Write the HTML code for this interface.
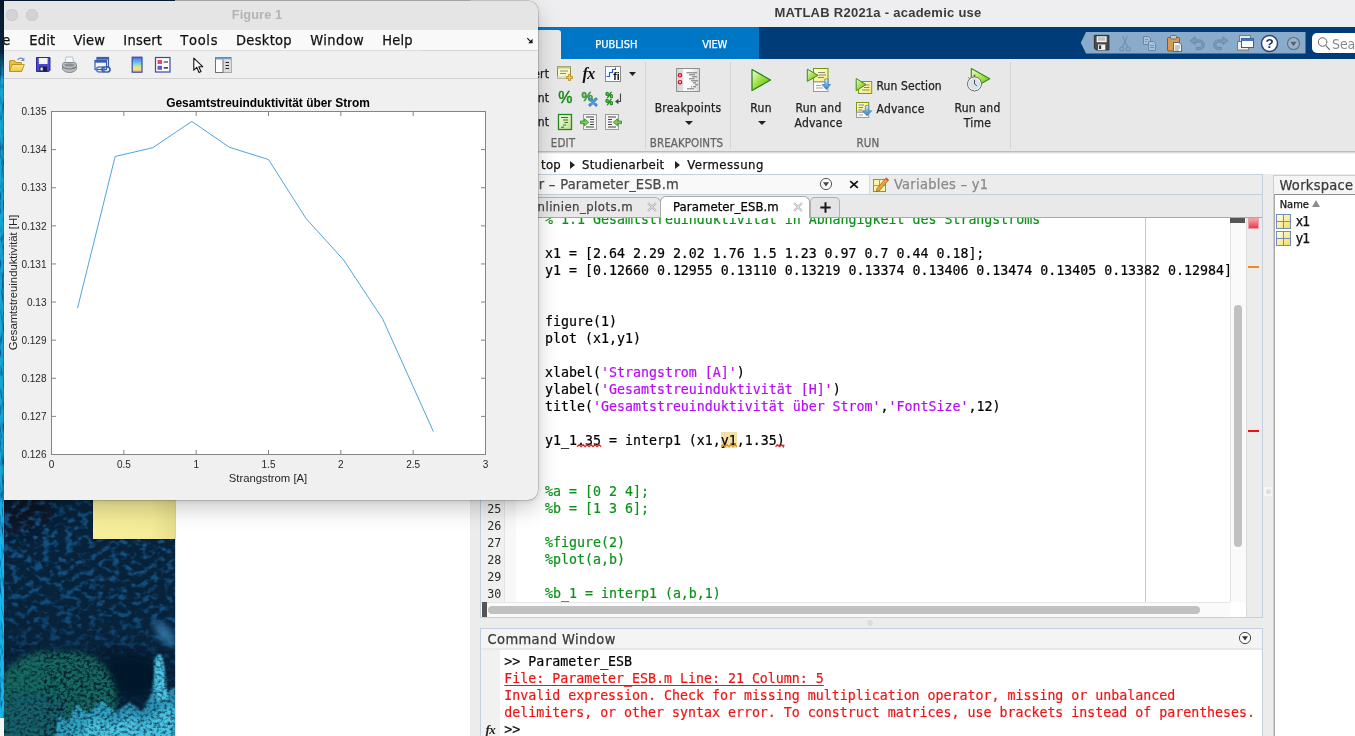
<!DOCTYPE html>
<html lang="de"><head><meta charset="utf-8"><title>MATLAB R2021a - academic use</title>
<style>
html,body{margin:0;padding:0;}
html{background:#fff;}
body{will-change:transform;width:1355px;height:736px;overflow:hidden;position:relative;background:#0b3050;color:#1a1a1a;}
.abs{position:absolute;}
.t{position:absolute;white-space:nowrap;}
.ui{font-family:"DejaVu Sans Condensed","DejaVu Sans","Liberation Sans",sans-serif;-webkit-text-stroke:0.25px currentColor;}
.mono{font-family:"DejaVu Sans Mono","Liberation Mono",monospace;}
.hel{font-family:"Liberation Sans",sans-serif;}
.code{-webkit-text-stroke:0.2px currentColor;position:absolute;white-space:pre;font-family:"DejaVu Sans Mono","Liberation Mono",monospace;font-size:13.28px;line-height:17px;height:17px;color:#000;}
.cm{color:#0c9218;}
.st{color:#b80cf7;}
.er{color:#f01414;}

</style></head><body>
<svg class="abs" style="left:0;top:0" width="4" height="718" viewBox="0 0 4 718"><defs>
<filter id="sn" color-interpolation-filters="sRGB" x="0" y="0" width="100%" height="100%"><feTurbulence type="fractalNoise" baseFrequency="0.5 0.09" numOctaves="2" seed="3"/><feColorMatrix type="matrix" values="0 0 0 0 0.02  0 0 0 0 0.28  0 0 0 0 0.5  2.4 0 0 0 -1.1"/></filter></defs>
<rect width="4" height="718" fill="#18b6ec"/><rect width="4" height="718" filter="url(#sn)"/><defs><linearGradient id="sg" x1="0" y1="0" x2="0" y2="1"><stop offset="0" stop-color="#08182c"/><stop offset=".65" stop-color="#0a2a48"/><stop offset="1" stop-color="#0a2a48" stop-opacity="0"/></linearGradient></defs><rect width="4" height="80" fill="url(#sg)"/></svg>
<div class="abs" style="left:0px;top:717.5px;width:4px;height:18.5px;background:#f4f4f4;"></div>
<svg class="abs" style="left:4px;top:0" width="172" height="736" viewBox="0 0 172 736"><defs>
<filter id="bl6" x="-30%" y="-30%" width="160%" height="160%"><feGaussianBlur stdDeviation="6"/></filter>
<filter id="bl3" x="-30%" y="-30%" width="160%" height="160%"><feGaussianBlur stdDeviation="3"/></filter>
<filter id="bl1" x="-10%" y="-10%" width="120%" height="120%"><feGaussianBlur stdDeviation="1.200"/></filter>
<filter id="blob" color-interpolation-filters="sRGB" x="0" y="0" width="100%" height="100%"><feTurbulence type="fractalNoise" baseFrequency="0.13 0.17" numOctaves="2" seed="11"/><feColorMatrix type="matrix" values="0 0 0 0 0.07  0 0 0 0 0.32  0 0 0 0 0.52  4.0 0 0 0 -1.9"/></filter>
<filter id="grn" color-interpolation-filters="sRGB" x="0" y="0" width="100%" height="100%"><feTurbulence type="fractalNoise" baseFrequency="0.3 0.35" numOctaves="2" seed="5"/><feColorMatrix type="matrix" values="0 0 0 0 0.02  0 0 0 0 0.10  0 0 0 0 0.16  2.6 0 0 0 -1.1"/></filter>
<linearGradient id="fade" x1="0" y1="0" x2="0" y2="1"><stop offset="0" stop-color="#fff" stop-opacity=".75"/><stop offset=".12" stop-color="#fff" stop-opacity="1"/><stop offset=".5" stop-color="#fff" stop-opacity=".85"/><stop offset=".68" stop-color="#fff" stop-opacity=".45"/><stop offset="1" stop-color="#fff" stop-opacity=".3"/></linearGradient>
<mask id="mk"><rect x="0" y="499" width="172" height="237" fill="url(#fade)"/></mask>
<clipPath id="dc"><rect x="0" y="0" width="171" height="736"/></clipPath>
</defs>
<g clip-path="url(#dc)">
<rect width="172" height="736" fill="#08223a"/>
<ellipse cx="10" cy="512" rx="40" ry="22" fill="#0a1626" filter="url(#bl6)"/>
<g mask="url(#mk)"><rect x="0" y="499" width="172" height="237" filter="url(#blob)"/></g>
<ellipse cx="126" cy="676" rx="34" ry="22" fill="#04142a" filter="url(#bl6)"/>
<path d="M148 622C158 620 172 628 172 648L156 640Z" fill="#3a8ac2" opacity=".7" filter="url(#bl3)"/>
<path d="M-6 690C0 660 30 648 60 652C85 650 104 660 112 690C118 720 100 740 60 742H-6Z" fill="#176a62" filter="url(#bl3)"/>
<path d="M-6 700C10 690 40 690 60 700C70 720 60 740 30 742H-6Z" fill="#155f6e" opacity=".7" filter="url(#bl3)"/>
<rect x="0" y="645" width="120" height="95" filter="url(#grn)" opacity=".8"/>
<path d="M50 742L54 716L64 722L72 704L84 714L98 700L112 712L126 702L138 712L147 694L152 664L157 660L161 694L172 686V742Z" fill="#35b0d8" opacity=".8" filter="url(#bl1)"/>
<path d="M74 742L80 726L94 718L108 724L124 716L142 722L158 708L172 706V742Z" fill="#4fd0ee" opacity=".8" filter="url(#bl3)"/>
<path d="M150 662C154 650 158 652 160 664L164 700H152Z" fill="#4cc4e6" filter="url(#bl1)"/>
<rect x="40" y="650" width="132" height="86" filter="url(#grn)" opacity=".75"/>
</g></svg>
<div class="abs" style="left:175px;top:0px;width:300px;height:736px;background:#ffffff;"></div>
<div class="abs" style="left:175px;top:0px;width:300px;height:1px;background:#c9c9c9;"></div>
<div class="abs" style="left:175px;top:0px;width:1px;height:736px;background:#dcdcdc;"></div>
<div class="abs" style="left:93px;top:499.5px;width:82px;height:39.5px;background:linear-gradient(90deg,#f6ee9b 0%,#f4ec98 70%,#e6de8c 100%);box-shadow:0 1px 1px rgba(0,0,0,.35);"></div>
<div class="abs" style="left:470px;top:0px;width:885px;height:736px;background:#ececec;"></div>
<div class="abs" style="left:470px;top:0px;width:885px;height:27px;background:#eeeef0;"></div>
<span class="t hel" style="left:878px;top:3.80px;font-size:13px;line-height:18px;color:#3b3b3b;letter-spacing:0.26px;transform:translateX(-50%);font-weight:bold;">MATLAB R2021a - academic use</span>
<div class="abs" style="left:470px;top:27px;width:885px;height:32px;background:#003c78;"></div>
<div class="abs" style="left:470px;top:27px;width:289px;height:32px;background:#0076c6;"></div>
<div class="abs" style="left:470px;top:30px;width:91px;height:30px;background:#e8e8e8;border-radius:3px 3px 0 0;"></div>
<span class="t ui" style="left:616.4px;top:36.50px;font-size:11px;line-height:15px;color:#ffffff;letter-spacing:0.02px;transform:translateX(-50%);">PUBLISH</span>
<span class="t ui" style="left:714.7px;top:36.50px;font-size:11px;line-height:15px;color:#ffffff;letter-spacing:-0.15px;transform:translateX(-50%);">VIEW</span>
<svg class="abs" style="left:1080px;top:32px" width="226" height="22" viewBox="0 0 226 22"><path d="M6 0H225.500V21.500H6L0.800 10.700Z" fill="#8aabc9"/></svg>
<div class="abs" style="left:1312px;top:33px;width:60px;height:20px;background:#ffffff;border-radius:5px;"></div>
<svg class="abs" style="left:1317px;top:36px" width="14" height="15" viewBox="0 0 14 15"><circle cx="5.600" cy="6" r="4.300" fill="none" stroke="#666" stroke-width="1"/><path d="M8.700 9.300L12.800 13.800" stroke="#666" stroke-width="1.100" fill="none"/></svg>
<span class="t ui" style="left:1332px;top:33.80px;font-size:14px;line-height:20px;color:#8a8a8a;letter-spacing:-0.1px;-webkit-text-stroke:0;">Search</span>
<div class="abs" style="left:470px;top:59px;width:885px;height:92px;background:#e8e8e8;"></div>
<div class="abs" style="left:470px;top:151px;width:885px;height:1px;background:#bdbdbd;"></div>
<div class="abs" style="left:470px;top:152px;width:885px;height:1px;background:#d9d9d9;"></div>
<div class="abs" style="left:470px;top:153px;width:885px;height:1px;background:#f6f6f6;"></div>
<div class="abs" style="left:645px;top:62px;width:1px;height:86px;background:#d4d4d4;"></div>
<div class="abs" style="left:730px;top:62px;width:1px;height:86px;background:#d4d4d4;"></div>
<div class="abs" style="left:1010px;top:62px;width:1px;height:86px;background:#d4d4d4;"></div>
<span class="t ui" style="left:563px;top:135.00px;font-size:11.5px;line-height:16px;color:#666;letter-spacing:0.2px;transform:translateX(-50%);">EDIT</span>
<span class="t ui" style="left:686.5px;top:135.00px;font-size:11.5px;line-height:16px;color:#666;letter-spacing:0.05px;transform:translateX(-50%);">BREAKPOINTS</span>
<span class="t ui" style="left:868px;top:135.00px;font-size:11.5px;line-height:16px;color:#666;letter-spacing:0.2px;transform:translateX(-50%);">RUN</span>
<span class="t ui" style="left:549.2px;top:65.50px;font-size:12px;line-height:17px;color:#222;letter-spacing:0.2px;transform:translateX(-100%);">Insert</span>
<span class="t ui" style="left:549.2px;top:89.90px;font-size:12px;line-height:17px;color:#222;letter-spacing:0.2px;transform:translateX(-100%);">Comment</span>
<span class="t ui" style="left:549.2px;top:113.90px;font-size:12px;line-height:17px;color:#222;letter-spacing:0.2px;transform:translateX(-100%);">Indent</span>
<span class="t ui" style="left:688px;top:99.80px;font-size:12px;line-height:17px;color:#222;letter-spacing:0.22px;transform:translateX(-50%);">Breakpoints</span>
<span class="t ui" style="left:761.2px;top:99.80px;font-size:12px;line-height:17px;color:#222;letter-spacing:0.4px;transform:translateX(-50%);">Run</span>
<span class="t ui" style="left:818.5px;top:99.80px;font-size:12px;line-height:17px;color:#222;letter-spacing:0.22px;transform:translateX(-50%);">Run and</span>
<span class="t ui" style="left:818.5px;top:114.80px;font-size:12px;line-height:17px;color:#222;letter-spacing:0.22px;transform:translateX(-50%);">Advance</span>
<span class="t ui" style="left:876.5px;top:77.50px;font-size:12px;line-height:17px;color:#222;letter-spacing:0.1px;">Run Section</span>
<span class="t ui" style="left:876.5px;top:101.00px;font-size:12px;line-height:17px;color:#222;letter-spacing:0.22px;">Advance</span>
<span class="t ui" style="left:977.5px;top:99.80px;font-size:12px;line-height:17px;color:#222;letter-spacing:0.22px;transform:translateX(-50%);">Run and</span>
<span class="t ui" style="left:977.5px;top:114.80px;font-size:12px;line-height:17px;color:#222;letter-spacing:0.22px;transform:translateX(-50%);">Time</span>
<svg class="abs" style="left:684.5px;top:121.0px" width="8" height="4" viewBox="0 0 8 4"><path d="M0 0H8L4.0 4Z" fill="#222"/></svg>
<svg class="abs" style="left:757.5px;top:121.0px" width="8" height="4" viewBox="0 0 8 4"><path d="M0 0H8L4.0 4Z" fill="#222"/></svg>
<svg class="abs" style="left:629.0px;top:71.5px" width="7" height="4" viewBox="0 0 7 4"><path d="M0 0H7L3.5 4Z" fill="#222"/></svg>
<div class="abs" style="left:470px;top:154px;width:885px;height:20px;background:#ffffff;"></div>
<span class="t ui" style="left:561px;top:155.80px;font-size:13px;line-height:18px;color:#111;letter-spacing:0.25px;transform:translateX(-100%);">top</span>
<span class="t ui" style="left:582px;top:155.80px;font-size:13px;line-height:18px;color:#111;letter-spacing:0.25px;">Studienarbeit</span>
<span class="t ui" style="left:687.3px;top:155.80px;font-size:13px;line-height:18px;color:#111;letter-spacing:0.47px;">Vermessung</span>
<svg class="abs" style="left:569.5px;top:160.5px" width="5" height="8" viewBox="0 0 5 8"><path d="M0 0L5 4L0 8Z" fill="#222"/></svg>
<svg class="abs" style="left:674.5px;top:160.5px" width="5" height="8" viewBox="0 0 5 8"><path d="M0 0L5 4L0 8Z" fill="#222"/></svg>
<div class="abs" style="left:470px;top:174px;width:885px;height:562px;background:#ececec;"></div>
<div class="abs" style="left:480px;top:174px;width:783px;height:1px;background:#c3d0de;"></div>
<div class="abs" style="left:480px;top:175px;width:783px;height:19px;background:#f2f2f2;"></div>
<div class="abs" style="left:869px;top:175px;width:393px;height:19px;background:#ececec;"></div>
<div class="abs" style="left:869px;top:175px;width:1px;height:19px;background:#d0d8e2;"></div>
<div class="abs" style="left:481px;top:175px;width:388px;height:19px;background:#f9f9f9;"></div>
<div class="abs" style="left:480px;top:194px;width:783px;height:1px;background:#c3d0de;"></div>
<div class="abs" style="left:480px;top:194px;width:1px;height:424px;background:#c3d0de;"></div>
<div class="abs" style="left:1262px;top:175px;width:1px;height:443px;background:#c3d0de;"></div>
<div class="abs" style="left:480px;top:617px;width:783px;height:1px;background:#c3d0de;"></div>
<span class="t ui" style="left:555.5px;top:173.90px;font-size:14.5px;line-height:20px;color:#4a4a4a;letter-spacing:0.28px;transform:translateX(-100%);">Editor –</span>
<span class="t ui" style="left:560.3px;top:173.90px;font-size:14.5px;line-height:20px;color:#4a4a4a;letter-spacing:0.12px;">Parameter_ESB.m</span>
<svg class="abs" style="left:819px;top:177px" width="14" height="14" viewBox="0 0 14 14"><circle cx="7" cy="7" r="5.600" fill="#fdfdfd" stroke="#555" stroke-width="1"/><path d="M4 5.200H10L7 9.600Z" fill="#444"/></svg>
<svg class="abs" style="left:849px;top:180px" width="10" height="9" viewBox="0 0 10 9"><path d="M1.200 1.200L8.800 7.800M8.800 1.200L1.200 7.800" stroke="#111" stroke-width="1.700" fill="none"/></svg>
<svg class="abs" style="left:872px;top:176px" width="18" height="17" viewBox="0 0 18 17">
<rect x="1.500" y="3.500" width="12" height="12" fill="#fbf3a8" stroke="#7a8aa8" stroke-width="1"/>
<path d="M1.500 9.500H13.500M7.500 3.500V15.500" stroke="#8c9bb5" stroke-width="1"/>
<path d="M5 12.500L13.800 2.200L16.300 4.300L7.500 14.600L4.300 15.600Z" fill="#e8a33a" stroke="#9a5a1a" stroke-width=".7"/>
<path d="M13.800 2.200L16.300 4.300" stroke="#d04a4a" stroke-width="1.600"/>
</svg>
<span class="t ui" style="left:894px;top:173.90px;font-size:14.5px;line-height:20px;color:#8a8a8a;letter-spacing:0.28px;">Variables – y1</span>
<div class="abs" style="left:481px;top:195px;width:781px;height:22px;background:#e9e9e9;"></div>
<div class="abs" style="left:481px;top:216.5px;width:781px;height:1px;background:#a9a9a9;"></div>
<div class="abs" style="left:481px;top:197px;width:180px;height:20px;background:#e9e9e9;border:1px solid #b4b4b4;border-left:none;border-bottom:none;border-radius:0 6px 0 0;box-sizing:border-box;"></div>
<span class="t ui" style="left:633px;top:198.00px;font-size:13px;line-height:18px;color:#444;letter-spacing:0.45px;transform:translateX(-100%);">Kennlinien_plots.m</span>
<svg class="abs" style="left:647px;top:202px" width="10" height="10" viewBox="0 0 10 10"><path d="M1 1L9 9M9 1L1 9" stroke="#b5b5b5" stroke-width="2.200" fill="none"/><path d="M1 1L9 9M9 1L1 9" stroke="#f4f4f4" stroke-width=".600" fill="none"/></svg>
<div class="abs" style="left:660px;top:196px;width:149.500px;height:22px;background:#ffffff;border:1px solid #aaaaaa;border-bottom:none;border-radius:6px 6px 0 0;box-sizing:border-box;"></div>
<span class="t ui" style="left:673px;top:198.00px;font-size:13px;line-height:18px;color:#000;letter-spacing:0.08px;">Parameter_ESB.m</span>
<svg class="abs" style="left:792.5px;top:202px" width="10" height="10" viewBox="0 0 10 10"><path d="M1 1L9 9M9 1L1 9" stroke="#bdbdbd" stroke-width="2.200" fill="none"/><path d="M1 1L9 9M9 1L1 9" stroke="#f4f4f4" stroke-width=".600" fill="none"/></svg>
<div class="abs" style="left:809.500px;top:197px;width:30.500px;height:20px;background:#e4e4e4;border:1px solid #b0b0b0;border-bottom:none;border-radius:5px 5px 0 0;box-sizing:border-box;"></div>
<svg class="abs" style="left:819.500px;top:201.500px" width="11" height="11" viewBox="0 0 11 11"><path d="M5.500 0.300V10.700M0.300 5.500H10.700" stroke="#1a1a1a" stroke-width="2" fill="none"/></svg>
<div class="abs" style="left:481px;top:217.5px;width:749px;height:384.5px;background:#ffffff;"></div>
<div class="abs" style="left:481px;top:217.5px;width:23px;height:384.5px;background:#f0f0f0;"></div>
<div class="abs" style="left:504px;top:217.5px;width:12px;height:384.5px;background:#f8f8f8;"></div>
<div class="abs" style="left:504px;top:217.5px;width:1px;height:384.5px;background:#e3e3e3;"></div>
<div class="abs" style="left:1145px;top:217.5px;width:1px;height:384.5px;background:#c8c8c8;"></div>
<span class="t mono" style="left:501.3px;top:500.80px;font-size:11.7px;line-height:16px;color:#2a2a2a;letter-spacing:0px;transform:translateX(-100%);">25</span>
<span class="t mono" style="left:501.3px;top:517.80px;font-size:11.7px;line-height:16px;color:#2a2a2a;letter-spacing:0px;transform:translateX(-100%);">26</span>
<span class="t mono" style="left:501.3px;top:534.80px;font-size:11.7px;line-height:16px;color:#2a2a2a;letter-spacing:0px;transform:translateX(-100%);">27</span>
<span class="t mono" style="left:501.3px;top:551.80px;font-size:11.7px;line-height:16px;color:#2a2a2a;letter-spacing:0px;transform:translateX(-100%);">28</span>
<span class="t mono" style="left:501.3px;top:568.80px;font-size:11.7px;line-height:16px;color:#2a2a2a;letter-spacing:0px;transform:translateX(-100%);">29</span>
<span class="t mono" style="left:501.3px;top:585.80px;font-size:11.7px;line-height:16px;color:#2a2a2a;letter-spacing:0px;transform:translateX(-100%);">30</span>
<div class="abs" style="left:516px;top:218px;width:714px;height:384px;overflow:hidden;">
<div class="code" style="left:29.1px;top:-6.899999999999977px;"><span class="cm">% 1.1 Gesamtstreuinduktivität in Abhängigkeit des Strangstroms</span></div>
<div class="code" style="left:29.1px;top:27.100000000000023px;">x1 = [2.64 2.29 2.02 1.76 1.5 1.23 0.97 0.7 0.44 0.18];</div>
<div class="code" style="left:29.1px;top:44.10000000000002px;">y1 = [0.12660 0.12955 0.13110 0.13219 0.13374 0.13406 0.13474 0.13405 0.13382 0.12984]</div>
<div class="code" style="left:29.1px;top:95.10000000000002px;">figure(1)</div>
<div class="code" style="left:29.1px;top:112.10000000000002px;">plot (x1,y1)</div>
<div class="code" style="left:29.1px;top:146.10000000000002px;">xlabel(<span class="st">'Strangstrom [A]'</span>)</div>
<div class="code" style="left:29.1px;top:163.10000000000002px;">ylabel(<span class="st">'Gesamtstreuinduktivität [H]'</span>)</div>
<div class="code" style="left:29.1px;top:180.10000000000002px;">title(<span class="st">'Gesamtstreuinduktivität über Strom'</span>,<span class="st">'FontSize'</span>,12)</div>
<div class="abs" style="left:205.0px;top:214.4px;width:16px;height:16px;background:#f3e0a8;"></div>
<div class="code" style="left:29.1px;top:214.10000000000002px;">y1_1.35 = interp1 (x1,y1,1.35)</div>
<svg class="abs" style="left:0;top:0" width="714" height="385"><path d="M61.1 228.7 L63.1 226.7 L65.1 228.7 L67.1 226.7 L69.1 228.7 L71.1 226.7 L73.1 228.7 L75.1 226.7 L77.1 228.7 L79.1 226.7 L81.1 228.7 L83.1 226.7 L85.1 228.7" stroke="#e02020" stroke-width="1.250" fill="none"/></svg>
<svg class="abs" style="left:0;top:0" width="714" height="385"><path d="M205.0 228.7 L207.0 226.7 L209.0 228.7 L211.0 226.7 L213.0 228.7 L215.0 226.7 L217.0 228.7 L219.0 226.7 L221.0 228.7" stroke="#e8901a" stroke-width="1.250" fill="none"/></svg>
<svg class="abs" style="left:0;top:0" width="714" height="385"><path d="M259.5 228.7 L261.5 226.7 L263.5 228.7 L265.5 226.7 L267.5 228.7 L268.0 226.7" stroke="#e02020" stroke-width="1.250" fill="none"/></svg>
<div class="code" style="left:29.1px;top:265.1px;"><span class="cm">%a = [0 2 4];</span></div>
<div class="code" style="left:29.1px;top:282.1px;"><span class="cm">%b = [1 3 6];</span></div>
<div class="code" style="left:29.1px;top:316.1px;"><span class="cm">%figure(2)</span></div>
<div class="code" style="left:29.1px;top:333.1px;"><span class="cm">%plot(a,b)</span></div>
<div class="code" style="left:29.1px;top:367.1px;"><span class="cm">%b_1 = interp1 (a,b,1)</span></div>
</div>
<div class="abs" style="left:1230px;top:217.5px;width:16px;height:384.5px;background:#fafafa;"></div>
<div class="abs" style="left:1230px;top:217.5px;width:1px;height:384.5px;background:#e2e2e2;"></div>
<div class="abs" style="left:1230px;top:217.5px;width:15px;height:5px;background:#555555;"></div>
<div class="abs" style="left:1234px;top:305px;width:8px;height:242px;background:#c1c1c1;border-radius:4px;"></div>
<div class="abs" style="left:1246px;top:217.5px;width:16px;height:399.5px;background:#ececec;"></div>
<div class="abs" style="left:1246px;top:217.5px;width:1px;height:399.5px;background:#dcdcdc;"></div>
<div class="abs" style="left:1248px;top:218px;width:11px;height:11px;background:linear-gradient(180deg,#f9a3aa,#e23a4a);border:1px solid #e9a0a8;box-sizing:border-box;"></div>
<div class="abs" style="left:1248px;top:266px;width:11px;height:2px;background:#f08a1c;"></div>
<div class="abs" style="left:1248px;top:430px;width:11px;height:2px;background:#ee1111;"></div>
<div class="abs" style="left:481px;top:602px;width:749px;height:15px;background:#fafafa;"></div>
<div class="abs" style="left:481px;top:602px;width:749px;height:1px;background:#e6e6e6;"></div>
<div class="abs" style="left:482px;top:602px;width:5px;height:15px;background:#555555;"></div>
<div class="abs" style="left:488px;top:605.5px;width:712px;height:8px;background:#c1c1c1;border-radius:4px;"></div>
<div class="abs" style="left:1230px;top:602px;width:16px;height:15px;background:#ffffff;"></div>
<div class="abs" style="left:867px;top:620px;width:6px;height:6px;border-radius:3px;background:#dcdcdc;"></div>
<div class="abs" style="left:1264px;top:487px;width:8px;height:9px;background:#f6f6f6;"></div><div class="abs" style="left:1265.500px;top:489px;width:5px;height:5px;border-radius:3px;background:#dedede;"></div>
<div class="abs" style="left:480px;top:628px;width:783px;height:1px;background:#c3d0de;"></div>
<div class="abs" style="left:480px;top:629px;width:783px;height:19px;background:#f4f4f4;"></div>
<div class="abs" style="left:480px;top:648px;width:783px;height:2px;background:#e4e9ee;"></div>
<div class="abs" style="left:480px;top:629px;width:1px;height:107px;background:#c3d0de;"></div>
<div class="abs" style="left:1262px;top:629px;width:1px;height:107px;background:#c3d0de;"></div>
<span class="t ui" style="left:487.5px;top:628.50px;font-size:14.5px;line-height:20px;color:#3a3a3a;letter-spacing:0.4px;">Command Window</span>
<svg class="abs" style="left:1238px;top:631px" width="14" height="14" viewBox="0 0 14 14"><circle cx="7" cy="7" r="5.600" fill="#fdfdfd" stroke="#444" stroke-width="1"/><path d="M4 5.200H10L7 9.600Z" fill="#333"/></svg>
<div class="abs" style="left:481px;top:650px;width:781px;height:86px;background:#ffffff;"></div>
<div class="abs" style="left:481px;top:650px;width:19px;height:86px;background:#f1f1f1;"></div>
<div class="code" style="left:504.3px;top:652.8px;">&gt;&gt; Parameter_ESB</div>
<div class="code" style="left:504.3px;top:669.8px;"><span class="er" style="text-decoration:underline;text-underline-offset:2px;">File: Parameter_ESB.m Line: 21 Column: 5</span></div>
<div class="code" style="left:504.3px;top:686.8px;"><span class="er">Invalid expression. Check for missing multiplication operator, missing or unbalanced</span></div>
<div class="code" style="left:504.3px;top:703.8px;"><span class="er">delimiters, or other syntax error. To construct matrices, use brackets instead of parentheses.</span></div>
<div class="code" style="left:504.3px;top:720.8px;">&gt;&gt;</div>
<span class="t" style="left:485.5px;top:721.5px;font-family:'Liberation Serif',serif;font-style:italic;font-weight:bold;font-size:13px;line-height:16px;color:#222;letter-spacing:-0.5px;">fx</span>
<div class="abs" style="left:1273px;top:175px;width:82px;height:1px;background:#c3d0de;"></div>
<div class="abs" style="left:1273px;top:176px;width:82px;height:18px;background:#f5f5f5;"></div>
<div class="abs" style="left:1273px;top:176px;width:1px;height:560px;background:#c3d0de;"></div>
<span class="t ui" style="left:1279.5px;top:175.00px;font-size:14.5px;line-height:20px;color:#3a3a3a;letter-spacing:0.3px;">Workspace</span>
<div class="abs" style="left:1274px;top:195px;width:81px;height:541px;background:#ffffff;"></div>
<div class="abs" style="left:1274px;top:194px;width:81px;height:1px;background:#8e8e8e;"></div>
<div class="abs" style="left:1274px;top:194px;width:1px;height:542px;background:#a8a8a8;"></div>
<span class="t ui" style="left:1279.7px;top:196.50px;font-size:11px;line-height:15px;color:#111;letter-spacing:0px;">Name</span>
<svg class="abs" style="left:1312px;top:200px" width="8" height="7" viewBox="0 0 8 7"><path d="M0 7H8L4 0Z" fill="#8c8c8c"/></svg>
<svg class="abs" style="left:1276px;top:213.5px" width="15" height="15" viewBox="0 0 15 15"><defs><linearGradient id="wg213.5" x1="0" y1="0" x2="1" y2="1"><stop offset="0" stop-color="#fffef0"/><stop offset="1" stop-color="#f5dc5a"/></linearGradient></defs><rect x=".5" y=".5" width="14" height="14" fill="url(#wg213.5)" stroke="#6f8fb8"/><path d="M.5 7.500H14.500M7.500 .5V14.500" stroke="#6f8fb8" stroke-width="1"/></svg>
<svg class="abs" style="left:1276px;top:230.5px" width="15" height="15" viewBox="0 0 15 15"><defs><linearGradient id="wg230.5" x1="0" y1="0" x2="1" y2="1"><stop offset="0" stop-color="#fffef0"/><stop offset="1" stop-color="#f5dc5a"/></linearGradient></defs><rect x=".5" y=".5" width="14" height="14" fill="url(#wg230.5)" stroke="#6f8fb8"/><path d="M.5 7.500H14.500M7.500 .5V14.500" stroke="#6f8fb8" stroke-width="1"/></svg>
<span class="t ui" style="left:1295.7px;top:211.00px;font-size:14px;line-height:20px;color:#111;letter-spacing:-0.8px;">x1</span>
<span class="t ui" style="left:1295.7px;top:228.00px;font-size:14px;line-height:20px;color:#111;letter-spacing:-0.8px;">y1</span>
<svg class="abs" style="left:556px;top:65px;" width="18" height="18" viewBox="0 0 18 18"><rect x="1.500" y="1.500" width="13" height="11.500" fill="#fbf7c4" stroke="#8a8a5a" stroke-width="1"/><rect x="1.500" y="1.500" width="13" height="2" fill="#c5c58a"/><rect x="1.500" y="11" width="13" height="2" fill="#dedede"/>
<path d="M4 6H12M4 8.500H10" stroke="#8a8a7a" stroke-width="1.200"/>
<path d="M12.500 9.500H14.500V11.500H16.500V13.500H14.500V15.500H12.500V13.500H10.500V11.500H12.500Z" fill="#f8d23a" stroke="#b88a10" stroke-width=".8"/></svg>
<span class="t" style="left:582.5px;top:64px;font-family:'Liberation Serif',serif;font-style:italic;font-weight:bold;font-size:16px;line-height:20px;color:#111;letter-spacing:-0.5px;">fx</span>
<svg class="abs" style="left:604px;top:65px;" width="18" height="18" viewBox="0 0 18 18"><rect x="1.500" y="1.500" width="15" height="15" fill="#fbfcff" stroke="#8a8a8a" stroke-width="1"/>
<path d="M2.500 11.500H5.500V7.500H8.500V4.500H11.500V2.500" fill="none" stroke="#1c5fd0" stroke-width="1.100"/>
<text x="9.300" y="15.300" font-family="Liberation Sans, sans-serif" font-size="10.500" font-weight="bold" fill="#111">fi</text></svg>
<span class="t hel" style="left:558.3px;top:90.3px;font-size:16px;line-height:16px;color:#1d8a1d;font-weight:normal;-webkit-text-stroke:0.5px #1d8a1d;text-shadow:0 0 1.500px #fff;">%</span>
<span class="t hel" style="left:581.5px;top:90px;font-size:13px;line-height:13px;color:#3c9a3c;font-weight:bold;-webkit-text-stroke:0.5px #3c9a3c;text-shadow:0 0 1.500px #fff;">%</span>
<svg class="abs" style="left:588px;top:97px;" width="10" height="10" viewBox="0 0 10 10"><path d="M2 2L8 8M8 2L2 8" stroke="#2f6fb8" stroke-width="3" stroke-linecap="round"/><path d="M2 2L8 8M8 2L2 8" stroke="#5a9ee0" stroke-width="1.500" stroke-linecap="round"/></svg>
<span class="t hel" style="left:605.5px;top:90.5px;font-size:8.5px;line-height:8.5px;color:#1d8a1d;font-weight:bold;-webkit-text-stroke:0.5px #1d8a1d;text-shadow:0 0 1.500px #fff;">%</span>
<span class="t hel" style="left:605.5px;top:98px;font-size:8.5px;line-height:8.5px;color:#1d8a1d;font-weight:bold;-webkit-text-stroke:0.5px #1d8a1d;text-shadow:0 0 1.500px #fff;">%</span>
<svg class="abs" style="left:614px;top:92px;" width="9" height="14" viewBox="0 0 9 14"><path d="M6.500 1.500V9.500H2.500" fill="none" stroke="#444" stroke-width="1.100"/><path d="M4.500 6.800L1 9.500L4.500 12.200Z" fill="#444"/></svg>
<svg class="abs" style="left:557px;top:113px;" width="16" height="18" viewBox="0 0 16 18"><defs><linearGradient id="si" x1="0" y1="0" x2="1" y2="1"><stop offset="0" stop-color="#f7fbe8"/><stop offset="1" stop-color="#bfe08a"/></linearGradient></defs>
<rect x="1.500" y="1.500" width="13" height="15" fill="url(#si)" stroke="#1d8a1d" stroke-width="1.300"/>
<path d="M4 4.500H11M6 7H11M7.500 9.500H11M6 12H9M4 14.200H7" stroke="#2a7a2a" stroke-width="1.100"/></svg>
<svg class="abs" style="left:580px;top:113px;" width="18" height="18" viewBox="0 0 18 18"><rect x="3.500" y="1.500" width="13" height="15" fill="#f4f4f4" stroke="#9a9a9a" stroke-width="1"/>
<path d="M6 4H14M10 6.500H14M10 9H14M10 11.500H14M6 14H14" stroke="#444" stroke-width="1.100"/>
<path d="M0.500 8H4.500V5.800L8.800 9.300L4.500 12.800V10.600H0.500Z" fill="#7ccf50" stroke="#2a8a1a" stroke-width=".8"/></svg>
<svg class="abs" style="left:604px;top:113px;" width="18" height="18" viewBox="0 0 18 18"><rect x="1.500" y="1.500" width="13" height="15" fill="#f4f4f4" stroke="#9a9a9a" stroke-width="1"/>
<path d="M4 4H12M4 6.500H8M4 9H8M4 11.500H8M4 14H12" stroke="#444" stroke-width="1.100"/>
<path d="M17.500 8H13.500V5.800L9.200 9.300L13.500 12.800V10.600H17.500Z" fill="#7ccf50" stroke="#2a8a1a" stroke-width=".8"/></svg>
<svg class="abs" style="left:675px;top:67px;" width="26" height="26" viewBox="0 0 26 26"><defs><linearGradient id="bp" x1="0" y1="0" x2="1" y2="0"><stop offset="0" stop-color="#d6d6d6"/><stop offset=".26" stop-color="#dedede"/><stop offset=".34" stop-color="#ffffff"/><stop offset=".7" stop-color="#f4f4f4"/><stop offset="1" stop-color="#d4d4d4"/></linearGradient></defs>
<rect x="1.500" y="1.500" width="23" height="23" fill="url(#bp)" stroke="#8f8f8f" stroke-width="1"/>
<circle cx="5" cy="8.300" r="1.700" fill="#f7c4c8" stroke="#c4141f" stroke-width="1.200"/><circle cx="5" cy="15.200" r="1.700" fill="#f7c4c8" stroke="#c4141f" stroke-width="1.200"/>
<path d="M11.500 5.800H22M14 7.800H20M17 9.800H22M14 11.800H19.500M16 13.800H23M18 15.800H21M20 17.800H23M16 19.800H17M18 19.800H21M12 21.800H19" stroke="#5a5a5a" stroke-width=".85"/></svg>
<svg class="abs" style="left:750px;top:67px;" width="23" height="26" viewBox="0 0 23 26"><defs><linearGradient id="rg" x1="0" y1="0" x2="1" y2="1"><stop offset="0" stop-color="#f6fde6"/><stop offset=".5" stop-color="#98dc3c"/><stop offset="1" stop-color="#52b818"/></linearGradient></defs>
<path d="M2 2.500L20.500 13L2 23.500Z" fill="url(#rg)" stroke="#24800f" stroke-width="1.200" stroke-linejoin="round"/></svg>
<svg class="abs" style="left:0;top:0" width="0" height="0"><defs><linearGradient id="gy" x1="0" y1="0" x2="1" y2="1"><stop offset="0" stop-color="#fffdf0"/><stop offset="1" stop-color="#f7e96a"/></linearGradient><linearGradient id="gg" x1="0" y1="0" x2="1" y2="1"><stop offset="0" stop-color="#f2fbe0"/><stop offset=".55" stop-color="#9ad93a"/><stop offset="1" stop-color="#5ab81a"/></linearGradient><linearGradient id="gb" x1="0" y1="0" x2="0" y2="1"><stop offset="0" stop-color="#eaf4fc"/><stop offset=".6" stop-color="#5aa6e0"/><stop offset="1" stop-color="#2f7fc4"/></linearGradient></defs></svg>
<svg class="abs" style="left:805px;top:66px;" width="28" height="28" viewBox="0 0 28 28"><rect x="8.500" y="2.500" width="14.500" height="13.500" fill="url(#gy)" stroke="#6a9a14" stroke-width="1"/><path d="M13 6.500H20M14 9H21M13 11.500H19" stroke="#7a7a6a" stroke-width=".9"/>
<rect x="8.500" y="16" width="14.500" height="9.500" fill="#fcfcfc" stroke="#9a9a9a" stroke-width="1"/><path d="M11 19.500H16M11 22H18" stroke="#9a9a9a" stroke-width=".9"/>
<path d="M2.300 3.200L13.200 9.300L2.300 15.400Z" fill="url(#gg)" stroke="#3a8f12" stroke-width="1" stroke-linejoin="round"/>
<path d="M19.800 13H23V18.500H25.600L21.400 23.500L17 18.500H19.800Z" fill="url(#gb)" stroke="#3a7ab8" stroke-width=".7" stroke-linejoin="round"/></svg>
<svg class="abs" style="left:854px;top:77px;" width="20" height="18" viewBox="0 0 20 18"><rect x="4.500" y="4.500" width="13.200" height="12" fill="url(#gy)" stroke="#7a9a1a" stroke-width="1"/><path d="M11 8H15.500M10 10.500H15.500M8 13H15.500" stroke="#7a7a6a" stroke-width=".9"/>
<path d="M2.200 1.500L12 7.600L2.200 13.700Z" fill="url(#gg)" stroke="#3a8f12" stroke-width="1" stroke-linejoin="round"/></svg>
<svg class="abs" style="left:854px;top:101px;" width="20" height="18" viewBox="0 0 20 18"><rect x="2.500" y="1.500" width="12.200" height="9.800" fill="url(#gy)" stroke="#7a9a1a" stroke-width="1"/><path d="M4.500 4H10M4.500 6.500H9M4.500 9H8" stroke="#7a7a5a" stroke-width=".9"/>
<rect x="2.500" y="11.300" width="12.200" height="5.200" fill="#fcfcfc" stroke="#9a9a9a" stroke-width="1"/><path d="M4.500 14H9" stroke="#9a9a9a" stroke-width=".9"/>
<path d="M11.400 4.500H14.700V9.800H17.700L13 14.800L8.400 9.800H11.400Z" fill="url(#gb)" stroke="#3a7ab8" stroke-width=".7" stroke-linejoin="round"/></svg>
<svg class="abs" style="left:965px;top:66px;" width="28" height="28" viewBox="0 0 28 28"><defs><linearGradient id="rt" x1="0" y1="0" x2="1" y2="1"><stop offset="0" stop-color="#f0fbd8"/><stop offset=".5" stop-color="#a5e04a"/><stop offset="1" stop-color="#5cc01a"/></linearGradient></defs>
<path d="M6.300 2.500L24.800 12.800L6.300 23Z" fill="url(#rt)" stroke="#2f8f12" stroke-width="1.100" stroke-linejoin="round"/>
<circle cx="9.500" cy="17.900" r="7" fill="#fbfbfb" stroke="#6a6a6a" stroke-width="1"/><circle cx="9.500" cy="17.900" r="5.200" fill="#d6e4ee" stroke="#c0ccd6" stroke-width=".5"/>
<path d="M9.500 13.800V18L11.800 19.800" fill="none" stroke="#4a4a4a" stroke-width="1"/><path d="M8.300 9.300H10.700M9.500 9.300V11M3.300 11.300L4.800 12.800" stroke="#6a6a6a" stroke-width="1" fill="none"/></svg>
<svg class="abs" style="left:1092.5px;top:34.2px;" width="17.3" height="17.3" viewBox="0 0 19 19"><path d="M1.500 1.500H17.500V17.500H3.500L1.500 15.500Z" fill="#4a4a4a" stroke="#2c2c2c" stroke-width="1"/><rect x="4" y="2.500" width="11" height="6.500" fill="#f2f2f2"/><path d="M5.500 4.500H13.500M5.500 6.500H13.500" stroke="#8a8a8a" stroke-width=".9"/><rect x="5.500" y="11.500" width="8" height="6" fill="#f4f4f4"/><rect x="6.500" y="12.500" width="2.500" height="4" fill="#3a3a3a"/></svg>
<svg class="abs" style="left:1118px;top:35px;" width="14" height="18" viewBox="0 0 14 18"><path d="M9.500 1L4.500 12M4.500 1L9.500 12" stroke="#6f8fb0" stroke-width="1.100" fill="none"/><circle cx="3.800" cy="14" r="2" fill="none" stroke="#6f8fb0" stroke-width="1.100"/><circle cx="10.200" cy="14" r="2" fill="none" stroke="#6f8fb0" stroke-width="1.100"/></svg>
<svg class="abs" style="left:1142px;top:35px;" width="16" height="17" viewBox="0 0 16 17"><path d="M1.500 1.500H6.500L8.500 3.500V9.500H1.500Z" fill="#a9c1d8" stroke="#6888a8" stroke-width="1"/><path d="M6.500 6.500H11.500L13.500 8.500V15.500H6.500Z" fill="#a9c1d8" stroke="#6888a8" stroke-width="1"/><path d="M3 4.500H6M3 6.500H5M8 10.500H12M8 12.500H12" stroke="#6888a8" stroke-width=".8"/></svg>
<svg class="abs" style="left:1166px;top:34px;" width="17" height="19" viewBox="0 0 17 19"><rect x="1.500" y="3.500" width="12" height="13.500" rx="1" fill="#d99a52" stroke="#8a5a22" stroke-width="1"/><rect x="4.500" y="1.500" width="6" height="3.500" rx="1" fill="#c8c8c8" stroke="#6a6a6a" stroke-width=".9"/>
<path d="M7.500 8.500H13L15.500 11V17.500H7.500Z" fill="#fbfbfb" stroke="#5a5a5a" stroke-width=".9"/><path d="M9 12H14M9 14H14M9 16H13" stroke="#7a7a7a" stroke-width=".8"/></svg>
<svg class="abs" style="left:1189px;top:36px;" width="17" height="15" viewBox="0 0 17 15"><path d="M6.200 0.800L1 4.700L6.200 8.600V6.200H10.200C12 6.200 13 7.300 13 8.800C13 10.300 12 11.400 10.200 11.400H7.500V13.600H10.400C13.500 13.600 15.300 11.500 15.300 8.800C15.300 6.100 13.500 3.900 10.400 3.900H6.200Z" fill="#7d9bb9" stroke="#6583a3" stroke-width=".8" stroke-linejoin="round"/></svg>
<svg class="abs" style="left:1212px;top:36px;" width="17" height="15" viewBox="0 0 17 15"><path d="M10.800 0.800L16 4.700L10.800 8.600V6.200H6.800C5 6.200 4 7.300 4 8.800C4 10.300 5 11.400 6.800 11.400H9.500V13.600H6.600C3.500 13.600 1.700 11.500 1.700 8.800C1.700 6.100 3.500 3.900 6.600 3.900H10.800Z" fill="#7d9bb9" stroke="#6583a3" stroke-width=".8" stroke-linejoin="round"/></svg>
<svg class="abs" style="left:1236px;top:34px;" width="19" height="18" viewBox="0 0 19 18"><rect x="3.500" y="1.500" width="11" height="8" fill="#e6e6e6" stroke="#7a7a7a" stroke-width="1"/><rect x="1.500" y="7.500" width="11" height="8.500" fill="#efefef" stroke="#7a7a7a" stroke-width="1"/>
<rect x="5.500" y="4.500" width="12" height="9" fill="#fdfdfd" stroke="#5a5a5a" stroke-width="1"/><rect x="5.500" y="4.500" width="12" height="2.500" fill="#3a78c8"/></svg>
<svg class="abs" style="left:1260px;top:34px;" width="19" height="19" viewBox="0 0 19 19"><circle cx="9.500" cy="9.500" r="8" fill="#fbfbfd" stroke="#2a3f6a" stroke-width="1.400"/><text x="9.500" y="14.300" text-anchor="middle" font-family="Liberation Sans, sans-serif" font-weight="bold" font-size="13.500" fill="#1c2f5a">?</text></svg>
<svg class="abs" style="left:1286px;top:36px;" width="15" height="15" viewBox="0 0 15 15"><circle cx="7.500" cy="7.500" r="6" fill="#9ab4cf" stroke="#5f6f80" stroke-width="1.100"/><path d="M4.200 5.800H10.800L7.500 10.300Z" fill="#5a6470"/></svg>
<div class="abs" id="fig" style="left:4px;top:1px;width:534px;height:499px;background:#f0f0f0;border-radius:0 10px 10px 0;overflow:hidden;box-shadow:0 0 0 .5px rgba(0,0,0,.28),0 9px 22px rgba(0,0,0,.20),0 1px 5px rgba(0,0,0,.10);"></div>
<div class="abs" style="left:4px;top:1px;width:534px;height:499px;border-radius:0 10px 10px 0;overflow:hidden;">
<div class="abs" style="left:0px;top:0px;width:534px;height:29px;background:#e5e5e5;"></div>
<div class="abs" style="left:0px;top:29px;width:534px;height:21px;background:#f9f9f9;"></div>
<div class="abs" style="left:0px;top:49px;width:534px;height:1px;background:#dddddd;"></div>
<div class="abs" style="left:0px;top:50px;width:534px;height:27px;background:#f0f0f0;"></div>
<div class="abs" style="left:0px;top:77px;width:534px;height:1px;background:#d2d2d2;"></div>
<div class="abs" style="left:418px;top:49px;width:116px;height:1px;background:#d4d4d4;"></div>
<div class="abs" style="left:2px;top:8px;width:12px;height:12px;border-radius:6px;background:#d3d3d3;box-shadow:inset 0 0 0 .5px #c2c2c2;"></div>
<div class="abs" style="left:22px;top:8px;width:12px;height:12px;border-radius:6px;background:#d3d3d3;box-shadow:inset 0 0 0 .5px #c2c2c2;"></div>
<span class="t hel" style="left:253px;top:5.00px;font-size:12.8px;line-height:18px;color:#b4b4b4;letter-spacing:0.1px;transform:translateX(-50%);font-weight:bold;">Figure 1</span>
<span class="t ui" style="left:6.5px;top:29.00px;font-size:14.5px;line-height:20px;color:#111;letter-spacing:0.3px;transform:translateX(-100%);">File</span>
<span class="t ui" style="left:25.3px;top:29.30px;font-size:14.5px;line-height:20px;color:#111;letter-spacing:0.2px;">Edit</span>
<span class="t ui" style="left:69.5px;top:29.30px;font-size:14.5px;line-height:20px;color:#111;letter-spacing:0.15px;">View</span>
<span class="t ui" style="left:119.3px;top:29.30px;font-size:14.5px;line-height:20px;color:#111;letter-spacing:0.25px;">Insert</span>
<span class="t ui" style="left:176.2px;top:29.30px;font-size:14.5px;line-height:20px;color:#111;letter-spacing:0.75px;font-kerning:none;">Tools</span>
<span class="t ui" style="left:232px;top:29.30px;font-size:14.5px;line-height:20px;color:#111;letter-spacing:0.3px;">Desktop</span>
<span class="t ui" style="left:306.3px;top:29.30px;font-size:14.5px;line-height:20px;color:#111;letter-spacing:0.4px;">Window</span>
<span class="t ui" style="left:378.3px;top:29.30px;font-size:14.5px;line-height:20px;color:#111;letter-spacing:0.2px;">Help</span>
<svg class="abs" style="left:522px;top:35.5px" width="8" height="7" viewBox="0 0 9 9"><path d="M1 1.500L6 6.500" stroke="#111" stroke-width="1.500" fill="none"/><path d="M7.800 2.400V8H2.200Z" fill="#111"/></svg>
</div>
<svg class="abs" style="left:0;top:0" width="540" height="500" viewBox="0 0 540 500"><rect x="51.5" y="111.5" width="434.0" height="343.0" fill="#ffffff" stroke="#848484" stroke-width="1"/><path d="M123.83 454.5V450.0M123.83 111.5V116.0M196.17 454.5V450.0M196.17 111.5V116.0M268.50 454.5V450.0M268.50 111.5V116.0M340.83 454.5V450.0M340.83 111.5V116.0M413.17 454.5V450.0M413.17 111.5V116.0M51.5 416.39H56.0M485.5 416.39H481.0M51.5 378.28H56.0M485.5 378.28H481.0M51.5 340.17H56.0M485.5 340.17H481.0M51.5 302.06H56.0M485.5 302.06H481.0M51.5 263.94H56.0M485.5 263.94H481.0M51.5 225.83H56.0M485.5 225.83H481.0M51.5 187.72H56.0M485.5 187.72H481.0M51.5 149.61H56.0M485.5 149.61H481.0" stroke="#848484" stroke-width="1" fill="none"/><polyline points="433.42,431.63 382.79,319.21 343.73,260.13 306.11,218.59 268.50,159.52 229.44,147.32 191.83,121.41 152.77,147.71 115.15,156.47 77.54,308.15" fill="none" stroke="#3c9ad6" stroke-width="0.9" stroke-linejoin="round"/><text x="51.50" y="468.2" font-family="Liberation Sans, sans-serif" font-size="10" fill="#262626" text-anchor="middle">0</text><text x="123.83" y="468.2" font-family="Liberation Sans, sans-serif" font-size="10" fill="#262626" text-anchor="middle">0.5</text><text x="196.17" y="468.2" font-family="Liberation Sans, sans-serif" font-size="10" fill="#262626" text-anchor="middle">1</text><text x="268.50" y="468.2" font-family="Liberation Sans, sans-serif" font-size="10" fill="#262626" text-anchor="middle">1.5</text><text x="340.83" y="468.2" font-family="Liberation Sans, sans-serif" font-size="10" fill="#262626" text-anchor="middle">2</text><text x="413.17" y="468.2" font-family="Liberation Sans, sans-serif" font-size="10" fill="#262626" text-anchor="middle">2.5</text><text x="485.50" y="468.2" font-family="Liberation Sans, sans-serif" font-size="10" fill="#262626" text-anchor="middle">3</text><text x="46.5" y="458.20" font-family="Liberation Sans, sans-serif" font-size="10" fill="#262626" text-anchor="end">0.126</text><text x="46.5" y="420.09" font-family="Liberation Sans, sans-serif" font-size="10" fill="#262626" text-anchor="end">0.127</text><text x="46.5" y="381.98" font-family="Liberation Sans, sans-serif" font-size="10" fill="#262626" text-anchor="end">0.128</text><text x="46.5" y="343.87" font-family="Liberation Sans, sans-serif" font-size="10" fill="#262626" text-anchor="end">0.129</text><text x="46.5" y="305.76" font-family="Liberation Sans, sans-serif" font-size="10" fill="#262626" text-anchor="end">0.13</text><text x="46.5" y="267.64" font-family="Liberation Sans, sans-serif" font-size="10" fill="#262626" text-anchor="end">0.131</text><text x="46.5" y="229.53" font-family="Liberation Sans, sans-serif" font-size="10" fill="#262626" text-anchor="end">0.132</text><text x="46.5" y="191.42" font-family="Liberation Sans, sans-serif" font-size="10" fill="#262626" text-anchor="end">0.133</text><text x="46.5" y="153.31" font-family="Liberation Sans, sans-serif" font-size="10" fill="#262626" text-anchor="end">0.134</text><text x="46.5" y="115.20" font-family="Liberation Sans, sans-serif" font-size="10" fill="#262626" text-anchor="end">0.135</text><text x="268" y="482" font-family="Liberation Sans, sans-serif" font-size="11.3" fill="#262626" text-anchor="middle">Strangstrom [A]</text><text x="0" y="0" transform="translate(16.5,282.5) rotate(-90)" font-family="Liberation Sans, sans-serif" font-size="11.3" fill="#262626" text-anchor="middle">Gesamtstreuinduktivität [H]</text><text x="268" y="106.5" font-family="Liberation Sans, sans-serif" font-size="11.95" font-weight="bold" fill="#000" text-anchor="middle">Gesamtstreuinduktivität über Strom</text></svg>
<svg class="abs" style="left:8px;top:56px;" width="18" height="18" viewBox="0 0 18 18"><defs><linearGradient id="fo" x1="0" y1="0" x2="0" y2="1"><stop offset="0" stop-color="#fbe98a"/><stop offset="1" stop-color="#f0c83a"/></linearGradient></defs>
<path d="M1.500 5V15.500H13.500V6.500H8L6.500 4.500H2Z" fill="#e8c040" stroke="#b8901c" stroke-width=".9"/>
<path d="M1.500 15.500L4 8.500H16.300L13.600 15.500Z" fill="url(#fo)" stroke="#b8901c" stroke-width=".9"/>
<path d="M9.500 4C11 1.800 13.500 1.600 15 3.300" fill="none" stroke="#6d8fc0" stroke-width="1.300"/><path d="M16.300 1.500V5H12.800Z" fill="#6d8fc0"/></svg>
<svg class="abs" style="left:35px;top:56px;" width="17" height="18" viewBox="0 0 17 18"><path d="M1.500 1.500H15V14.300L13.800 15.500H1.500Z" fill="#4a48cf" stroke="#2a2a90" stroke-width="1"/>
<rect x="3.800" y="2" width="8.800" height="6" fill="#f4f4fb"/><rect x="4.500" y="10.500" width="7.500" height="5" fill="#1c1c50"/><rect x="5.500" y="11.500" width="2.300" height="3" fill="#e6e6f0"/></svg>
<svg class="abs" style="left:61px;top:56px;" width="17" height="18" viewBox="0 0 17 18"><path d="M5 1H11.500L13 7H4Z" fill="#f4f8fc" stroke="#a9b4c0" stroke-width=".8"/>
<path d="M1.500 8.500C1.500 7 3 6.500 4.500 6.500H12.500C14 6.500 15.500 7 15.500 8.500V12.500C15.500 14.500 12 16.500 8.500 16.500S1.500 14.500 1.500 12.500Z" fill="#b9bcc0" stroke="#7c8086" stroke-width=".9"/>
<path d="M2 11C4 13.500 13 13.500 15 11" fill="none" stroke="#6d7076" stroke-width="1"/><ellipse cx="8.500" cy="9" rx="5" ry="1.500" fill="#8d9096"/><circle cx="12.800" cy="11.800" r=".9" fill="#38b048"/></svg>
<svg class="abs" style="left:94px;top:56px;" width="18" height="18" viewBox="0 0 18 18"><rect x="3" y="1.500" width="11.500" height="9" fill="#eef3fb" stroke="#3b5fae" stroke-width="1.200"/><rect x="3" y="1.500" width="11.500" height="2.200" fill="#3b5fae"/>
<rect x="1" y="4.500" width="11.500" height="9" fill="#f4f7fc" stroke="#3b5fae" stroke-width="1.200"/><rect x="1" y="4.500" width="11.500" height="2.200" fill="#3b5fae"/>
<rect x="2.500" y="11" width="8" height="5" rx="2.500" fill="none" stroke="#5a7fc4" stroke-width="1.700"/><rect x="8" y="11" width="8" height="5" rx="2.500" fill="none" stroke="#41639f" stroke-width="1.700"/></svg>
<svg class="abs" style="left:131px;top:56px;" width="13" height="18" viewBox="0 0 13 18"><defs><linearGradient id="cb" x1="0" y1="0" x2="0" y2="1"><stop offset="0" stop-color="#6a5be8"/><stop offset=".35" stop-color="#5fc4f0"/><stop offset=".6" stop-color="#bfe9a0"/><stop offset=".8" stop-color="#fbe07a"/><stop offset="1" stop-color="#f6a58c"/></linearGradient></defs>
<rect x="1.200" y="1.200" width="9.800" height="15" fill="url(#cb)" stroke="#3a4c9c" stroke-width="1.200"/></svg>
<svg class="abs" style="left:154px;top:56px;" width="18" height="18" viewBox="0 0 18 18"><rect x="1.500" y="1.500" width="14.500" height="14.500" fill="#fcfcff" stroke="#3a4c9c" stroke-width="1.200"/>
<rect x="3.500" y="4" width="4.500" height="4" fill="#f0475a"/><rect x="3.500" y="9.800" width="4.500" height="4" fill="#5a5ae8"/>
<path d="M9.800 6H14M9.800 11.800H14" stroke="#111" stroke-width="1.200"/></svg>
<svg class="abs" style="left:192px;top:57px;" width="13" height="18" viewBox="0 0 13 18"><path d="M1.800 1.200V13.200L4.800 10.400L7 15.500L9 14.600L6.800 9.700H10.700Z" fill="#ffffff" stroke="#111" stroke-width="1.100" stroke-linejoin="round"/></svg>
<svg class="abs" style="left:214px;top:56px;" width="18" height="18" viewBox="0 0 18 18"><rect x="1.500" y="1.500" width="15.500" height="15" fill="#fdfdfd" stroke="#6f6f6f" stroke-width="1"/>
<rect x="1.500" y="1.500" width="15.500" height="2" fill="#6fa0d0"/><rect x="9" y="3.500" width="8" height="13" fill="#dcdcdc"/><path d="M9 3.500V16.500" stroke="#6f6f6f" stroke-width="1"/>
<path d="M11.500 6.500H15M11.500 9.500H15M11.500 12.500H15" stroke="#222" stroke-width="1.200"/></svg>
</body></html>
